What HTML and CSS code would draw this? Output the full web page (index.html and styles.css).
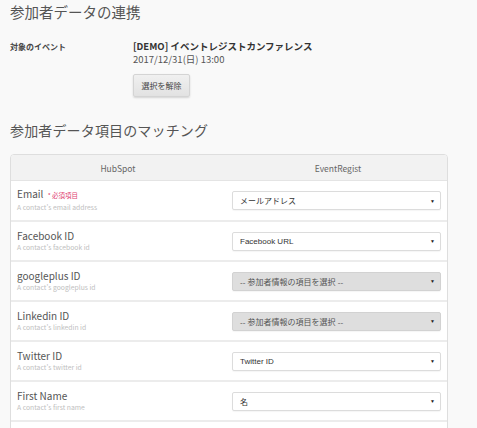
FILE: index.html
```html
<!DOCTYPE html>
<html lang="ja">
<head>
<meta charset="utf-8">
<link rel="stylesheet" href="styles.css">
</head>
<body>
<div class="page">
  <h1 class="title">参加者データの連携</h1>
  <div class="event">
    <div class="event-label">対象のイベント</div>
    <div class="event-info">
      <div class="event-name">[DEMO] イベントレジストカンファレンス</div>
      <div class="event-date">2017/12/31(日) 13:00</div>
      <button class="btn">選択を解除</button>
    </div>
  </div>
  <h2 class="title title-2">参加者データ項目のマッチング</h2>
  <div class="table">
    <div class="row head">
      <div class="cell">HubSpot</div>
      <div class="cell">EventRegist</div>
    </div>
    <div class="row">
      <div class="cell left">
        <div class="name">Email <span class="req">* 必須項目</span></div>
        <div class="desc">A contact's email address</div>
      </div>
      <div class="cell right"><div class="select"><span>メールアドレス</span><span class="arrow">▼</span></div></div>
    </div>
    <div class="row">
      <div class="cell left">
        <div class="name">Facebook ID</div>
        <div class="desc">A contact's facebook id</div>
      </div>
      <div class="cell right"><div class="select"><span>Facebook URL</span><span class="arrow">▼</span></div></div>
    </div>
    <div class="row">
      <div class="cell left">
        <div class="name">googleplus ID</div>
        <div class="desc">A contact's googleplus id</div>
      </div>
      <div class="cell right"><div class="select empty"><span>-- 参加者情報の項目を選択 --</span><span class="arrow">▼</span></div></div>
    </div>
    <div class="row">
      <div class="cell left">
        <div class="name">Linkedin ID</div>
        <div class="desc">A contact's linkedin id</div>
      </div>
      <div class="cell right"><div class="select empty"><span>-- 参加者情報の項目を選択 --</span><span class="arrow">▼</span></div></div>
    </div>
    <div class="row">
      <div class="cell left">
        <div class="name">Twitter ID</div>
        <div class="desc">A contact's twitter id</div>
      </div>
      <div class="cell right"><div class="select"><span>Twitter ID</span><span class="arrow">▼</span></div></div>
    </div>
    <div class="row">
      <div class="cell left">
        <div class="name">First Name</div>
        <div class="desc">A contact's first name</div>
      </div>
      <div class="cell right"><div class="select"><span>名</span><span class="arrow">▼</span></div></div>
    </div>
    <div class="row"></div>
  </div>
</div>
</body>
</html>
```
FILE: styles.css
```css
*, *::before, *::after {
  box-sizing: border-box;
}
html, body {
  margin: 0;
  padding: 0;
  background: #f9f9f9;
  font-family: "Noto Sans CJK JP", "Liberation Sans", sans-serif;
  color: #555;
}
.page {
  padding: 0 29px 0 10px;
}
.title {
  margin: 2px 0 0;
  font-size: 14.5px;
  line-height: 20px;
  font-weight: normal;
  color: #555;
}
.title-2 {
  margin-top: 23px;
  font-size: 14px;
  letter-spacing: 0.15px;
}
.event {
  display: flex;
  margin-top: 18px;
}
.event-label {
  width: 123px;
  font-size: 8px;
  font-weight: bold;
  line-height: 13px;
  color: #444;
}
.event-info {
  display: flex;
  flex-direction: column;
  align-items: flex-start;
}
.event-name {
  font-size: 9.5px;
  font-weight: bold;
  line-height: 13px;
  color: #333;
}
.event-date {
  font-size: 9.5px;
  line-height: 13px;
  color: #555;
}
.btn {
  margin-top: 8px;
  width: 57px;
  height: 23px;
  padding: 0;
  font-family: "Noto Sans CJK JP", sans-serif;
  font-size: 8px;
  color: #444;
  background: linear-gradient(#f0f0f0, #e2e2e2);
  border: 1px solid #d4d4d4;
  border-radius: 2px;
  box-shadow: 0 1px 2px rgba(0,0,0,0.15);
}
.table {
  margin-top: 14px;
  background: #fff;
  border: 1px solid #dedede;
  border-radius: 4px;
  overflow: hidden;
}
.row {
  display: grid;
  grid-template-columns: 218px 1fr;
  height: 40px;
  border-top: 2px solid #ececec;
}
.row.head {
  height: 26px;
  border-top: none;
  background: #f2f2f2;
  border-bottom: 1px solid #e4e4e4;
}
.row.head + .row {
  border-top: none;
  height: 39px;
}
.head .cell {
  display: flex;
  align-items: center;
  justify-content: center;
  font-size: 8.5px;
  color: #666;
}
.head .cell:first-child { padding-right: 4px; }
.cell.left {
  padding: 7px 0 0 6px;
}
.row.head + .row .cell.left {
  padding-top: 6px;
}
.name {
  font-size: 10px;
  line-height: 13px;
  color: #555;
}
.req {
  font-size: 6.5px;
  color: #e0406f;
  margin-left: 2px;
}
.desc {
  font-size: 6.8px;
  line-height: 11px;
  color: #c0c0c0;
}
.cell.right {
  display: flex;
  align-items: center;
  padding: 0 6px 0 3px;
}
.select {
  flex: 1;
  height: 19px;
  display: flex;
  align-items: center;
  justify-content: space-between;
  padding: 0 5px 0 7px;
  border: 1px solid #dcdcdc;
  border-radius: 2px;
  background: #fff;
  font-family: "Liberation Sans", "Noto Sans CJK JP", sans-serif;
  font-size: 8px;
  color: #333;
  box-shadow: 0 1px 1px rgba(0,0,0,0.04);
}
.select.empty {
  background: #dedede;
  border-color: #d2d2d2;
  color: #555;
}
.arrow {
  font-size: 5px;
  color: #222;
}
```
